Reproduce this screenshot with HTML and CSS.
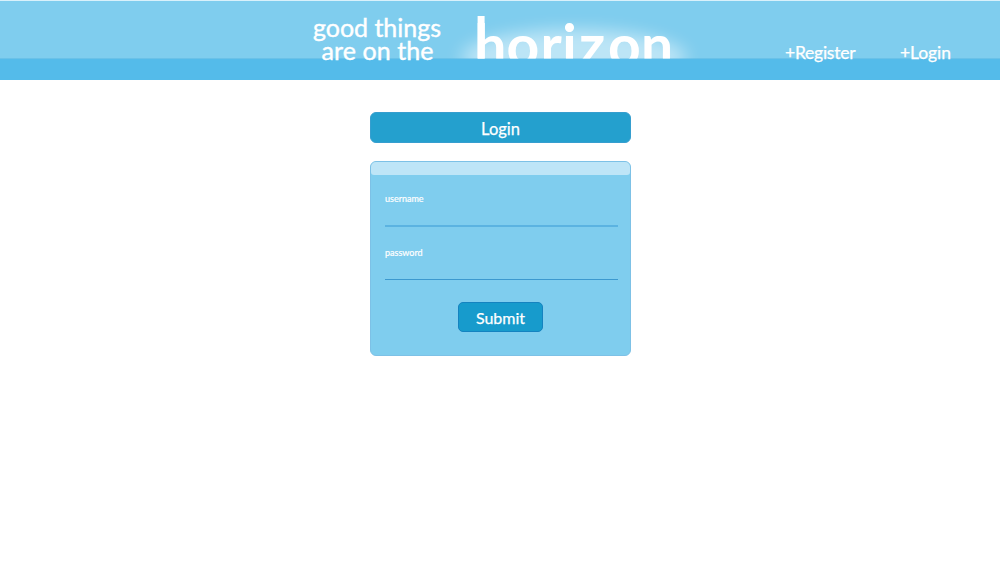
FILE: index.html
```html
<!DOCTYPE html>
<html lang="en">
<head>
<meta charset="utf-8">
<title>Horizon - Login</title>
<link rel="stylesheet" href="styles.css">
</head>
<body>
<header class="header">
  <svg class="brand" width="400" height="80" viewBox="0 0 400 80">
    <defs>
      <clipPath id="sky"><rect width="400" height="58.6"/></clipPath>
      <filter id="glow" x="-20%" y="-60%" width="140%" height="220%"><feGaussianBlur stdDeviation="9 8"/></filter>
    </defs>
    <g clip-path="url(#sky)">
      <ellipse class="sun" cx="274" cy="57" rx="112" ry="28" filter="url(#glow)"/>
      <rect class="stem" x="177.6" y="16" width="7" height="43"/>
      <text class="word" y="65.5" x="174.3 206.5 240.5 262.3 279 308 341">horizon</text>
    </g>
    <text class="tagline" x="13" y="37" textLength="128">good things</text>
    <text class="tagline" x="21.5" y="59.5" textLength="112">are on the</text>
  </svg>
  <nav class="nav">
    <a class="nav-link register">+Register</a>
    <a class="nav-link login">+Login</a>
  </nav>
</header>
<main class="main">
  <h1 class="title">Login</h1>
  <form class="card">
    <div class="card-top"></div>
    <label class="field"><span class="label">username</span></label>
    <label class="field second"><span class="label">password</span></label>
    <button class="submit" type="button">Submit</button>
  </form>
</main>
</body>
</html>
```
FILE: styles.css
```css
* { box-sizing: border-box; }
body {
  margin: 0;
  background: #fff;
  color: #fff;
  font-family: Lato, "Liberation Sans", sans-serif;
}
.header {
  display: flex;
  height: 80px;
  padding-left: 300px;
  background: linear-gradient(#d9f1fb 0 1px, #7fcdee 1px 58px, #6ac1e8 58px 59px, #54bbea 59px);
}
.brand { flex: none; }
.brand text,
.stem { fill: #fff; }
.sun { fill: #fff; opacity: .48; }
.word { font-size: 57px; font-weight: 700; }
.tagline { font-size: 25px; stroke: #fff; stroke-width: .4px; }
.nav { display: flex; padding: 42px 0 0 85px; }
.nav-link {
  font-size: 17.5px;
  line-height: 22px;
  white-space: nowrap;
  -webkit-text-stroke: .25px #fff;
}
.register { width: 115px; letter-spacing: -.25px; }
.login { letter-spacing: -.1px; }
.main {
  display: flex;
  flex-direction: column;
  width: 261px;
  margin: 32px 0 0 370px;
}
.title {
  height: 31px;
  margin: 0 0 18px;
  border: 1px solid #369ecf;
  border-radius: 6px;
  background: #24a0ce;
  font-size: 16.5px;
  font-weight: 400;
  line-height: 32px;
  text-align: center;
  -webkit-text-stroke: .25px #fff;
}
.card {
  display: flex;
  flex-direction: column;
  height: 195px;
  border: 1px solid #7dc1e6;
  border-radius: 6px;
  background: #7fcdee;
}
.card-top {
  height: 13px;
  border-radius: 5px 5px 3px 3px;
  background: #bee5f7;
}
.field {
  height: 52px;
  margin: 0 12px 0 14px;
  padding-top: 18px;
  border-bottom: 2px solid #5bb3e1;
}
.second {
  height: 53px;
  padding-top: 20px;
  border-bottom: 1px solid #3c99cf;
}
.label {
  display: block;
  font-size: 9px;
  line-height: 12px;
  -webkit-text-stroke: .2px #fff;
}
.submit {
  align-self: center;
  width: 85px;
  height: 30px;
  margin-top: 22px;
  padding: 0;
  border: 1px solid #1583c0;
  border-radius: 5px;
  background: #179bcc;
  color: #fff;
  font: 16px Lato, "Liberation Sans", sans-serif;
  -webkit-text-stroke: .25px #fff;
}
```
